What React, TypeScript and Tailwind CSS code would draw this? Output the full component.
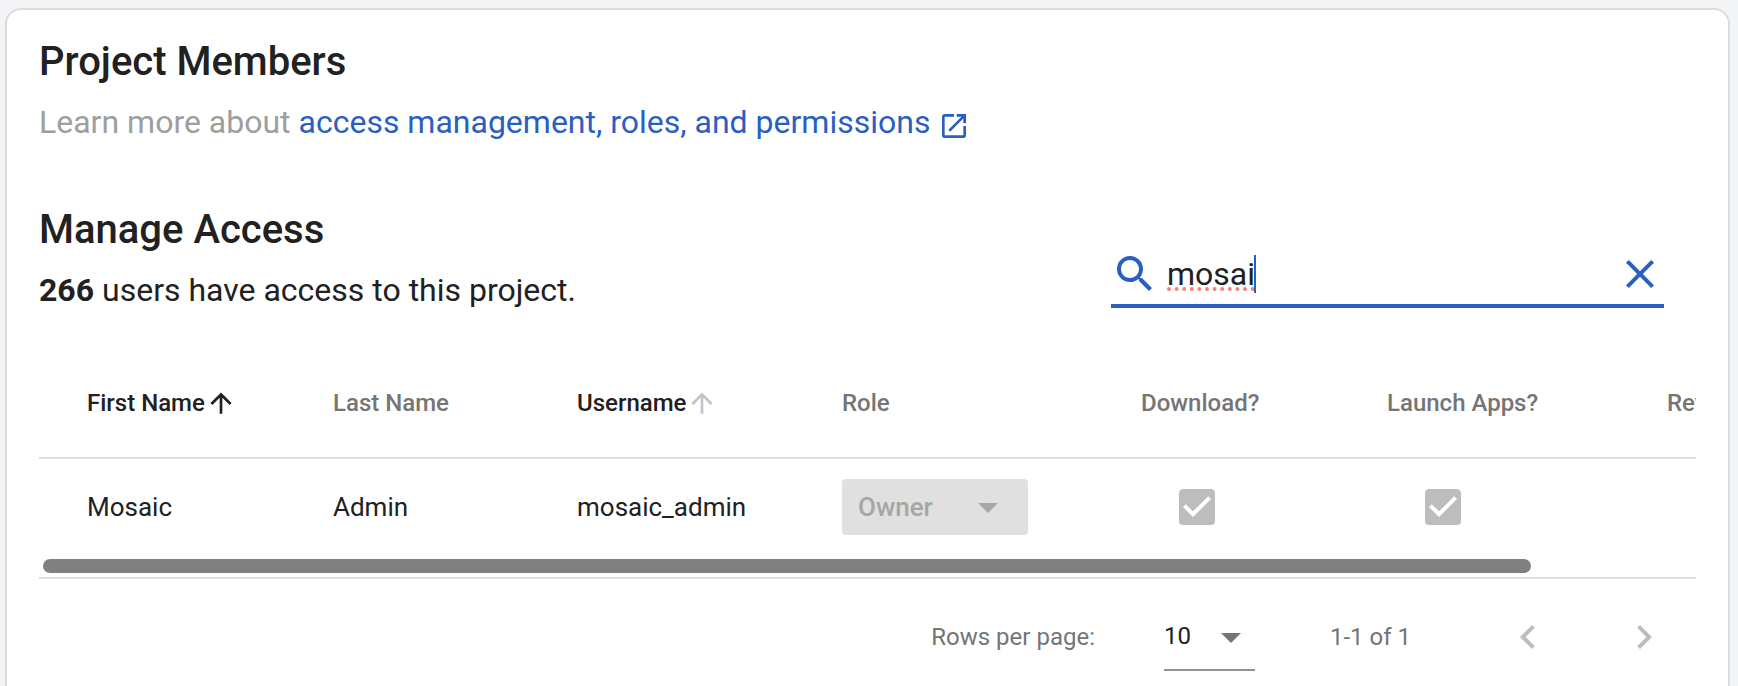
import React, { useState } from "react";

const Icon = ({ d, className }: { d: string; className: string }) => (
  <svg viewBox="0 0 24 24" fill="currentColor" className={className} aria-hidden="true">
    <path d={d} />
  </svg>
);

const icons = {
  openInNew:
    "M14,3V5H17.59L7.76,14.83L9.17,16.24L19,6.41V10H21V3M19,19H5V5H12V3H5C3.89,3 3,3.9 3,5V19A2,2 0 0,0 5,21H19A2,2 0 0,0 21,19V12H19V19Z",
  magnify:
    "M9.5,3A6.5,6.5 0 0,1 16,9.5C16,11.11 15.41,12.59 14.44,13.73L14.71,14H15.5L20.5,19L19,20.5L14,15.5V14.71L13.73,14.44C12.59,15.41 11.11,16 9.5,16A6.5,6.5 0 0,1 3,9.5A6.5,6.5 0 0,1 9.5,3M9.5,5C7,5 5,7 5,9.5C5,12 7,14 9.5,14C12,14 14,12 14,9.5C14,7 12,5 9.5,5Z",
  close:
    "M19,6.41L17.59,5L12,10.59L6.41,5L5,6.41L10.59,12L5,17.59L6.41,19L12,13.41L17.59,19L19,17.59L13.41,12L19,6.41Z",
  arrowUp:
    "M13,20H11V8L5.5,13.5L4.08,12.08L12,4.16L19.92,12.08L18.5,13.5L13,8V20Z",
  menuDown: "M7,10L12,15L17,10H7Z",
  checkbox:
    "M10,17L5,12L6.41,10.58L10,14.17L17.59,6.58L19,8M19,3H5C3.89,3 3,3.89 3,5V19A2,2 0 0,0 5,21H19A2,2 0 0,0 21,19V5C21,3.89 20.1,3 19,3Z",
  chevronLeft:
    "M15.41,16.58L10.83,12L15.41,7.41L14,6L8,12L14,18L15.41,16.58Z",
  chevronRight:
    "M8.59,16.58L13.17,12L8.59,7.41L10,6L16,12L10,18L8.59,16.58Z",
};

const Check = ({ label }: { label: string }) => (
  <span className="relative inline-flex align-middle">
    <input
      type="checkbox"
      aria-label={label}
      defaultChecked
      disabled
      className="h-12 w-12 appearance-none"
    />
    <Icon
      d={icons.checkbox}
      className="pointer-events-none absolute inset-0 h-12 w-12 text-[#bdbdbd]"
    />
  </span>
);

const Search = () => {
  const [query, setQuery] = useState("mosai");

  return (
    <div className="mr-8 mb-0.5 flex w-[553px] items-center border-b-4 border-[#2a5fc1] pb-1.5 text-[#2a5fc1]">
      <Icon d={icons.magnify} className="h-12 w-12 shrink-0" />
      <div className="relative ml-2 flex-1">
        <input
          type="text"
          aria-label="Search users"
          value={query}
          spellCheck={false}
          onChange={(e) => setQuery(e.target.value)}
          className="block h-12 w-full bg-transparent text-[32px] text-[#212121] outline-none"
        />
        {query === "mosai" && (
          <svg
            viewBox="0 0 90 48"
            className="pointer-events-none absolute top-0 left-0 h-12 w-[90px]"
            aria-hidden="true"
          >
            <path
              d="M2 39H87"
              stroke="#f28178"
              strokeWidth="4"
              strokeLinecap="round"
              strokeDasharray="0 7.6"
            />
            <path d="M88 5V43" stroke="#2a5fc1" strokeWidth="2" />
          </svg>
        )}
      </div>
      <button
        type="button"
        aria-label="Clear search"
        onClick={() => setQuery("")}
        className="shrink-0"
      >
        <Icon d={icons.close} className="h-12 w-12" />
      </button>
    </div>
  );
};

const th = "h-[110px] border-b-2 border-[#e0e0e0] pl-12 font-medium";

const App = () => {
  return (
    <div className="flex min-h-screen flex-col bg-[#f3f4f6] pt-2 pr-2 pl-[5px] font-['Roboto',sans-serif] text-[#212121]">
      <main className="flex-1 rounded-t-2xl border-2 border-b-0 border-[#d9dbde] bg-white px-8 pt-7">
        <h1 className="text-[40px] leading-12 font-medium">Project Members</h1>
        <p className="mt-4 flex text-[32px] leading-10 text-[#9e9e9e]">
          <span className="whitespace-pre">Learn more about </span>
          <a href="#" className="flex items-end gap-2 text-[#2a5fc1]">
            access management, roles, and permissions
            <Icon d={icons.openInNew} className="h-8 w-8" />
          </a>
        </p>

        <div className="mt-16 flex items-end justify-between">
          <div>
            <h2 className="text-[40px] leading-12 font-medium">Manage Access</h2>
            <p className="mt-4 text-[32px] leading-10">
              <b className="font-bold">266</b> users have access to this project.
            </p>
          </div>
          <Search />
        </div>

        <div className="mt-[39px] overflow-x-auto [scrollbar-width:none]">
          <table className="w-[1837px] table-fixed border-separate border-spacing-0 text-left text-[26px]">
            <thead className="text-2xl text-[#757575]">
              <tr>
                <th className={`${th} w-[246px] text-[#212121]`}>
                  <button type="button" className="flex items-center">
                    First Name
                    <Icon d={icons.arrowUp} className="h-8 w-8" />
                  </button>
                </th>
                <th className={`${th} w-[244px]`}>Last Name</th>
                <th className={`${th} w-[265px] text-[#212121]`}>
                  <button type="button" className="flex items-center">
                    Username
                    <Icon d={icons.arrowUp} className="h-8 w-8 text-[#c4c4c4]" />
                  </button>
                </th>
                <th className={`${th} w-[299px]`}>Role</th>
                <th className={`${th} w-[246px]`}>Download?</th>
                <th className={`${th} w-[280px]`}>Launch Apps?</th>
                <th className={th}>Revoke</th>
              </tr>
            </thead>
            <tbody>
              <tr>
                <td className="h-24 pl-12">Mosaic</td>
                <td className="pl-12">Admin</td>
                <td className="pl-12">mosaic_admin</td>
                <td className="pl-12">
                  <div className="relative w-[186px]">
                    <select
                      aria-label="Role"
                      disabled
                      className="block h-14 w-full appearance-none rounded bg-[#e0e0e0] pl-4 font-medium text-[#a6a6a6] opacity-100"
                    >
                      <option>Owner</option>
                    </select>
                    <Icon
                      d={icons.menuDown}
                      className="pointer-events-none absolute top-1 right-4 h-12 w-12 text-[#a6a6a6]"
                    />
                  </div>
                </td>
                <td className="pl-20">
                  <Check label="Download" />
                </td>
                <td className="pl-20">
                  <Check label="Launch apps" />
                </td>
                <td />
              </tr>
            </tbody>
          </table>
        </div>
        <div className="border-b-2 border-[#e0e0e0] py-1 pl-1">
          <div className="h-3.5 w-[90%] rounded-full bg-[#808080]" />
        </div>

        <div className="flex items-center justify-end pt-6 pr-7 text-2xl text-[#757575]">
          <label htmlFor="rows">Rows per page:</label>
          <div className="relative ml-[69px] w-[91px]">
            <select
              id="rows"
              className="block h-[68px] w-full appearance-none border-b-2 border-[#949494] text-[#212121]"
            >
              <option>10</option>
            </select>
            <Icon
              d={icons.menuDown}
              className="pointer-events-none absolute top-2.5 right-0 h-12 w-12"
            />
          </div>
          <span className="ml-[75px]">1-1 of 1</span>
          <button
            type="button"
            aria-label="Previous page"
            disabled
            className="ml-[93px] text-[#bdbdbd]"
          >
            <Icon d={icons.chevronLeft} className="h-12 w-12" />
          </button>
          <button
            type="button"
            aria-label="Next page"
            disabled
            className="ml-[68px] text-[#bdbdbd]"
          >
            <Icon d={icons.chevronRight} className="h-12 w-12" />
          </button>
        </div>
      </main>
    </div>
  );
};

export default App;
